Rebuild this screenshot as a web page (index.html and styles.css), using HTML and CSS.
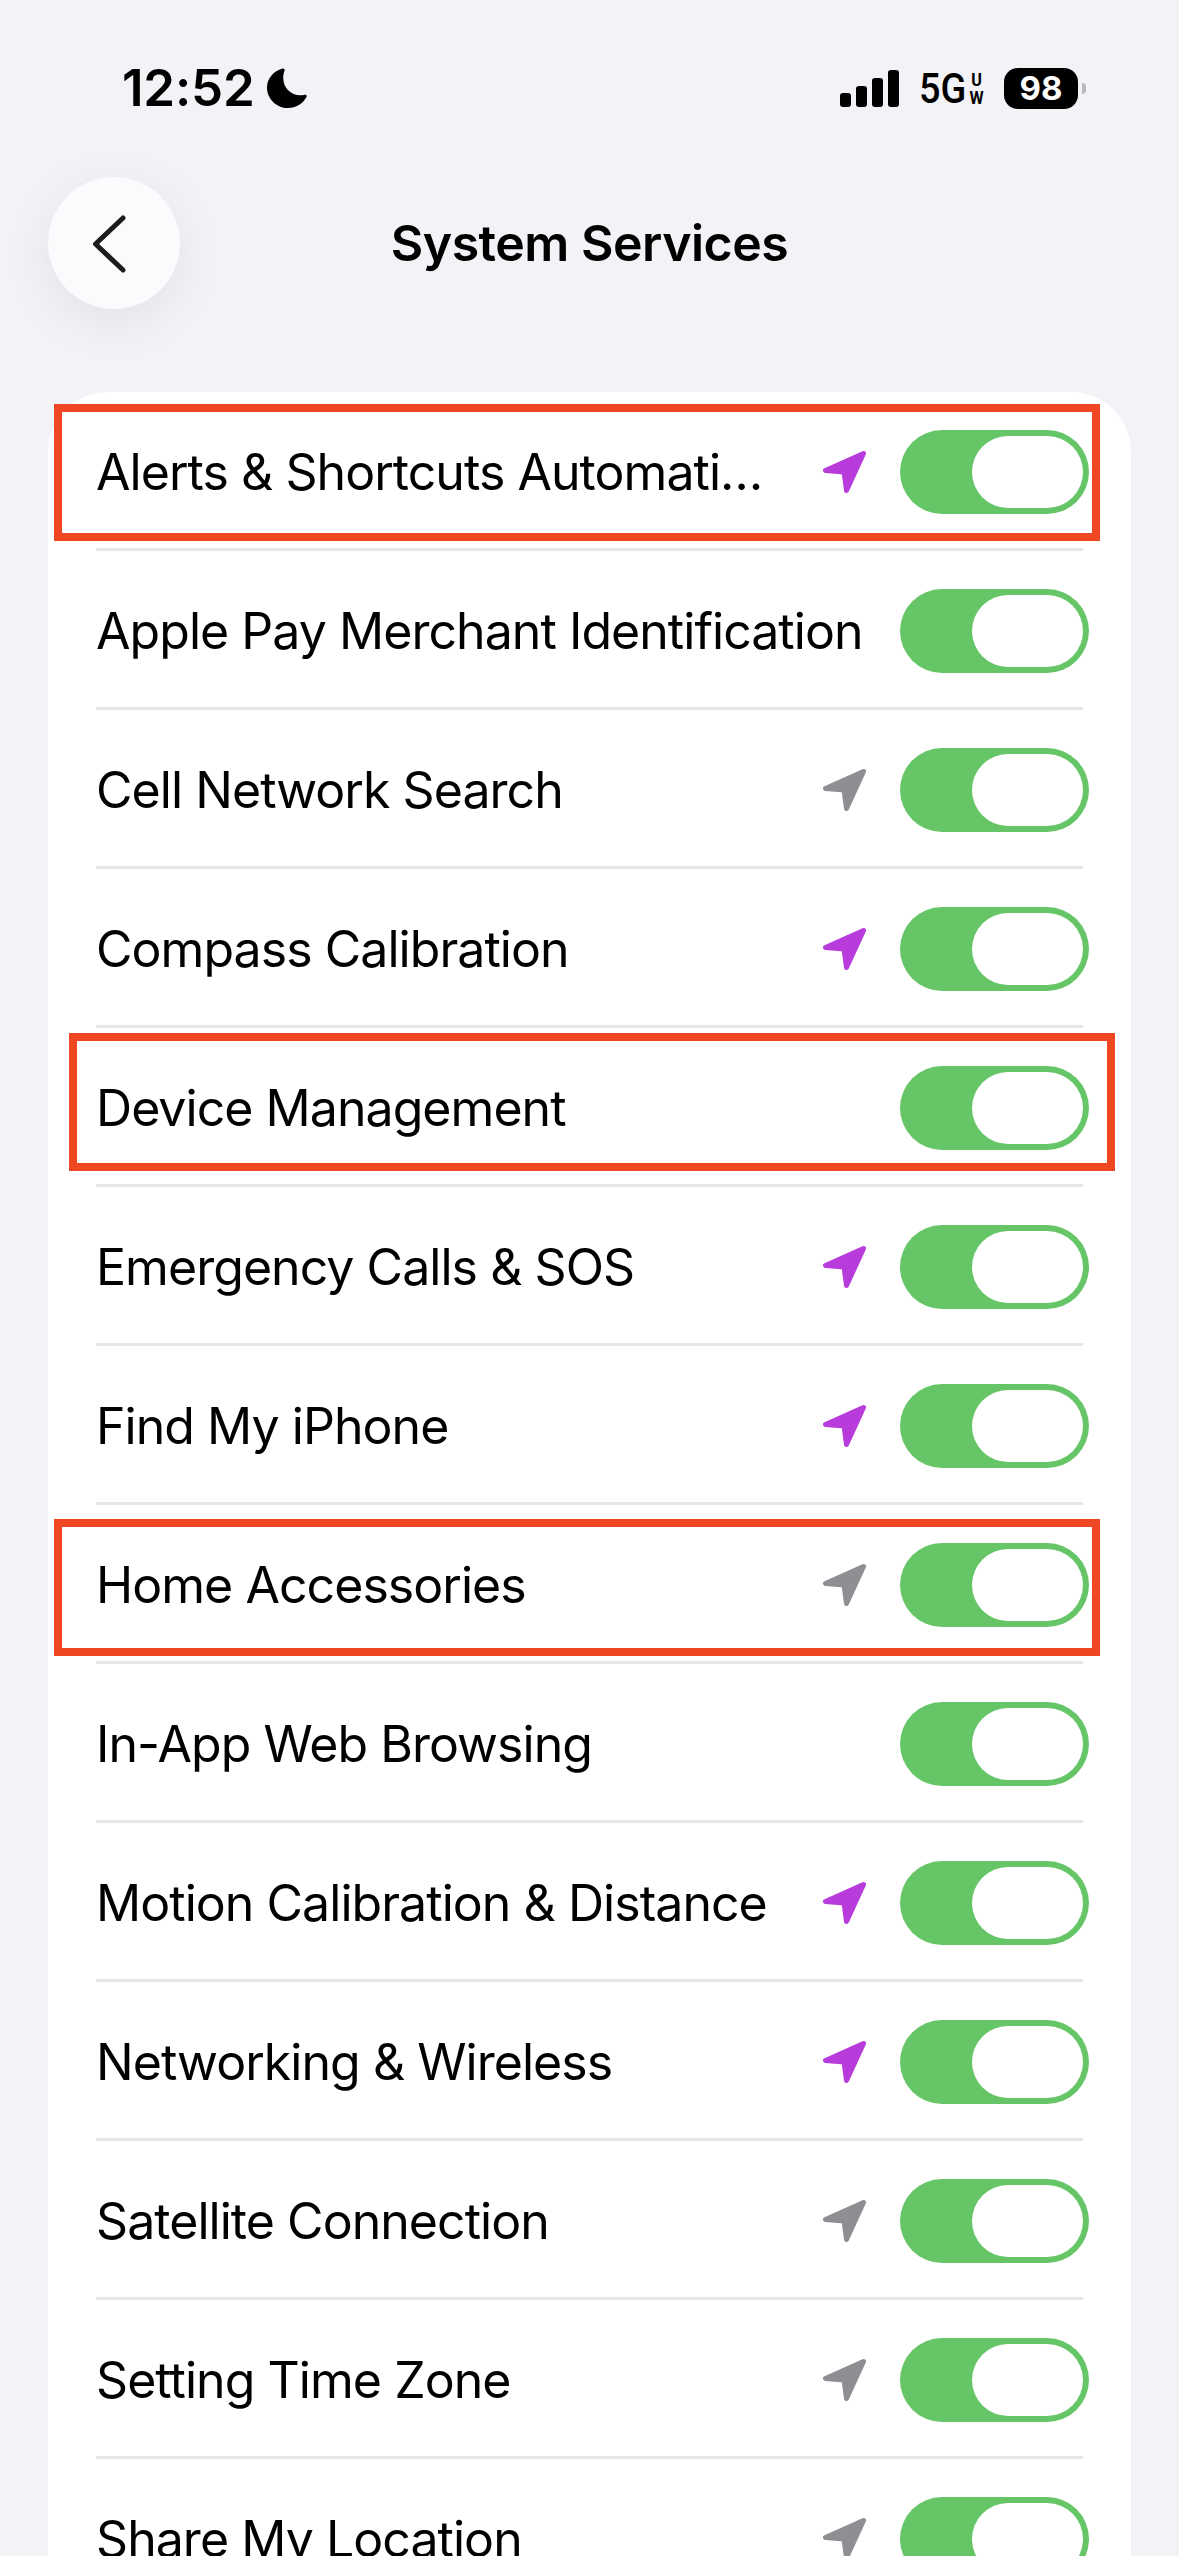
FILE: index.html
```html
<!DOCTYPE html>
<html lang="en">
<head>
<meta charset="utf-8">
<title>System Services</title>
<link rel="stylesheet" href="styles.css">
</head>
<body>
<svg class="defs" width="0" height="0" aria-hidden="true"><defs>
<symbol id="arrow" viewBox="0 0 44 44"><path d="M41.5 3.5 3.5 20.5 22 22 24.5 40.5Z" fill="currentColor" stroke="currentColor" stroke-width="5" stroke-linejoin="round"/></symbol>
</defs></svg>
<div class="status">
  <div class="status-left">
    <span class="time">12:52</span>
    <svg class="moon" viewBox="0 0 40 40"><path d="M15.5 0.5C17 0 18 1.3 17.5 2.8 16.6 5 16.2 7.4 16.2 9.8 16.2 19.8 23.6 27.3 33.4 27.3 34.8 27.3 36.3 27.1 37.7 26.7 39.2 26.4 40.2 27.7 39.5 29 36 35.6 29 40 21 40 9.4 40 0 30.8 0 19.4 0 10.9 6.4 3 15.5 0.5Z"/></svg>
  </div>
  <div class="status-right">
    <div class="signal"><i class="b1"></i><i class="b2"></i><i class="b3"></i><i class="b4"></i></div>
    <div class="net"><span class="fiveg">5G</span><span class="uw"><span>U</span><span>W</span></span></div>
    <div class="batt"><span class="batt-body">98</span><span class="batt-nub"></span></div>
  </div>
</div>
<header class="nav">
  <button class="back" aria-label="Back"><svg viewBox="0 0 132 132" width="132" height="132"><path d="M75 41 47.5 67 75 93" fill="none" stroke="#1c1c1e" stroke-width="5" stroke-linecap="round" stroke-linejoin="round"/></svg></button>
  <h1 class="title">System Services</h1>
</header>
<main class="card">
  <div class="row"><span class="label">Alerts &amp; Shortcuts Automati…</span><svg class="loc purple"><use href="#arrow"/></svg><span class="toggle"><span class="knob"></span></span></div>
  <div class="row"><span class="label">Apple Pay Merchant Identification</span><span class="toggle"><span class="knob"></span></span></div>
  <div class="row"><span class="label">Cell Network Search</span><svg class="loc gray"><use href="#arrow"/></svg><span class="toggle"><span class="knob"></span></span></div>
  <div class="row"><span class="label">Compass Calibration</span><svg class="loc purple"><use href="#arrow"/></svg><span class="toggle"><span class="knob"></span></span></div>
  <div class="row"><span class="label">Device Management</span><span class="toggle"><span class="knob"></span></span></div>
  <div class="row"><span class="label">Emergency Calls &amp; SOS</span><svg class="loc purple"><use href="#arrow"/></svg><span class="toggle"><span class="knob"></span></span></div>
  <div class="row"><span class="label">Find My iPhone</span><svg class="loc purple"><use href="#arrow"/></svg><span class="toggle"><span class="knob"></span></span></div>
  <div class="row"><span class="label">Home Accessories</span><svg class="loc gray"><use href="#arrow"/></svg><span class="toggle"><span class="knob"></span></span></div>
  <div class="row"><span class="label">In-App Web Browsing</span><span class="toggle"><span class="knob"></span></span></div>
  <div class="row"><span class="label">Motion Calibration &amp; Distance</span><svg class="loc purple"><use href="#arrow"/></svg><span class="toggle"><span class="knob"></span></span></div>
  <div class="row"><span class="label">Networking &amp; Wireless</span><svg class="loc purple"><use href="#arrow"/></svg><span class="toggle"><span class="knob"></span></span></div>
  <div class="row"><span class="label">Satellite Connection</span><svg class="loc gray"><use href="#arrow"/></svg><span class="toggle"><span class="knob"></span></span></div>
  <div class="row"><span class="label">Setting Time Zone</span><svg class="loc gray"><use href="#arrow"/></svg><span class="toggle"><span class="knob"></span></span></div>
  <div class="row"><span class="label">Share My Location</span><svg class="loc gray"><use href="#arrow"/></svg><span class="toggle"><span class="knob"></span></span></div>
</main>
<div class="mark mark-a"></div>
<div class="mark mark-b"></div>
<div class="mark mark-c"></div>
</body>
</html>
```
FILE: styles.css
```css
* { box-sizing: border-box; }
html, body { margin: 0; padding: 0; }
body {
  position: relative;
  width: 1179px;
  height: 2556px;
  overflow: hidden;
  background: #f2f2f7;
  color: #000;
  font-family: Inter, "Liberation Sans", sans-serif;
}
.defs { position: absolute; }

.status {
  display: flex;
  align-items: center;
  justify-content: space-between;
  height: 176px;
  padding: 0 93px 0 122px;
}
.status-left { display: flex; align-items: center; gap: 13px; }
.time { font-size: 51px; font-weight: 600; line-height: 60px; letter-spacing: -0.2px; }
.moon { width: 40px; height: 40px; display: block; }
.status-right { display: flex; align-items: center; }
.signal { display: flex; align-items: flex-end; gap: 5px; width: 59px; height: 37px; margin-right: 20px; }
.signal i { display: block; width: 11px; background: #000; border-radius: 3px; }
.b1 { height: 14px; }
.b2 { height: 21px; }
.b3 { height: 29px; }
.b4 { height: 37px; }
.net { display: flex; align-items: center; margin-right: 21px; }
.fiveg {
  display: block; width: 47px; white-space: nowrap;
  font-family: Roboto, sans-serif; font-size: 43px; font-weight: 500; line-height: 40px;
  transform: scaleX(.88); transform-origin: left center;
}
.uw {
  display: flex; flex-direction: column; align-items: center;
  width: 13px; margin: 2px 0 0 4px;
  font-family: Roboto, sans-serif; font-size: 19px; font-weight: 700; line-height: 18px;
  transform: scaleX(.85);
}
.batt { display: flex; align-items: center; gap: 4px; }
.batt-body {
  display: flex; align-items: center; justify-content: center;
  width: 74px; height: 41px; border-radius: 14px;
  background: #000; color: #fff;
  font-size: 33px; font-weight: 700; line-height: 1;
}
.batt-nub { width: 4px; height: 11px; background: #b9b9bd; border-radius: 0 4px 4px 0; }

.nav {
  display: grid;
  grid-template-columns: 132px 1fr 132px;
  align-items: center;
  height: 132px;
  margin: 1px 48px 83px;
}
.back {
  width: 132px; height: 132px; padding: 0; border: 0; border-radius: 50%;
  background: #fbfbfe;
  box-shadow: 0 12px 50px rgba(0, 0, 0, .07);
}
.back svg { display: block; }
.title { margin: 0; text-align: center; font-size: 50px; font-weight: 600; line-height: 60px; letter-spacing: -0.5px; }

.card {
  margin: 0 48px;
  height: 2164px;
  overflow: hidden;
  background: #fff;
  border-radius: 60px 60px 0 0;
  padding: 0 48px;
}
.row {
  display: flex;
  align-items: center;
  height: 159px;
  padding: 38px 0 34px;
  border-bottom: 3px solid #e6e6e8;
}
.label { flex: 1; min-width: 0; white-space: nowrap; font-size: 50px; line-height: 60px; font-weight: 400; letter-spacing: -0.95px; }
.loc { width: 44px; height: 44px; margin-right: 34px; flex: none; }
.purple { color: #b83bdb; }
.gray { color: #8e8e93; }
.toggle {
  display: flex; justify-content: flex-end; align-items: center;
  flex: none; width: 189px; height: 84px; margin-right: -6px; padding: 0 6px;
  border-radius: 42px; background: #66c667;
}
.knob { display: block; width: 111px; height: 72px; border-radius: 36px; background: #fff; }

.mark { position: absolute; border: 8px solid #ef4723; }
.mark-a { left: 54px; top: 404px; width: 1046px; height: 137px; }
.mark-b { left: 69px; top: 1033px; width: 1046px; height: 138px; }
.mark-c { left: 54px; top: 1519px; width: 1046px; height: 137px; }
```
